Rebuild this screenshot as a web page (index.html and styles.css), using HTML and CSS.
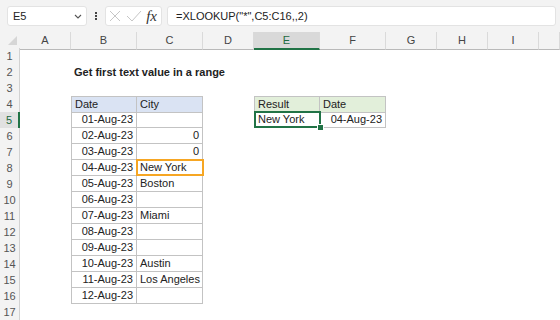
FILE: index.html
```html
<!DOCTYPE html>
<html lang="en">
<head>
  <meta charset="UTF-8" />
  <title>Get first text value in a range</title>
  <link rel="stylesheet" href="styles.css">
</head>
<body>

  <div class="toolbar">
    <div class="namebox">
      <span>E5</span>
      <svg width="8" height="5" viewBox="0 0 8 5"><path d="M1 1 L4 4 L7 1" fill="none" stroke="#555" stroke-width="1.1"/></svg>
    </div>
    <div class="dots"><i></i><i></i><i></i></div>
    <div class="fxbox">
      <svg width="12" height="12" viewBox="0 0 12 12"><path d="M1 1 L11 11 M11 1 L1 11" stroke="#c6c6c6" stroke-width="1"/></svg>
      <svg width="16" height="12" viewBox="0 0 16 12"><path d="M1 6 L6 11 L15 1" fill="none" stroke="#c6c6c6" stroke-width="1"/></svg>
      <span class="fx">fx</span>
    </div>
    <div class="formula">=XLOOKUP("*",C5:C16,,2)</div>
  </div>

  <div class="sheet">
    <div class="row head">
      <div class="corner"><svg width="20" height="16"><polygon points="17,4 17,13 8,13" fill="#d6d6d6"/></svg></div>
      <div class="ch">A</div><div class="ch">B</div><div class="ch">C</div><div class="ch">D</div>
      <div class="ch sel">E</div><div class="ch">F</div><div class="ch">G</div><div class="ch">H</div>
      <div class="ch">I</div><div class="ch"></div>
    </div>

    <div class="row"><div class="rh">1</div></div>
    <div class="row"><div class="rh">2</div><div class="c"></div><div class="c title">Get first text value in a range</div></div>
    <div class="row"><div class="rh">3</div></div>
    <div class="row">
      <div class="rh">4</div><div class="c"></div>
      <div class="c tb top lft blue">Date</div><div class="c tb top blue">City</div>
      <div class="c"></div>
      <div class="c tb top lft green">Result</div><div class="c tb top green">Date</div>
    </div>
    <div class="row">
      <div class="rh sel">5</div><div class="c"></div>
      <div class="c tb lft r">01-Aug-23</div><div class="c tb"></div>
      <div class="c"></div>
      <div class="c tb lft active">New York</div><div class="c tb r">04-Aug-23</div>
    </div>
    <div class="row"><div class="rh">6</div><div class="c"></div><div class="c tb lft r">02-Aug-23</div><div class="c tb r">0</div></div>
    <div class="row"><div class="rh">7</div><div class="c"></div><div class="c tb lft r">03-Aug-23</div><div class="c tb r">0</div></div>
    <div class="row"><div class="rh">8</div><div class="c"></div><div class="c tb lft r">04-Aug-23</div><div class="c tb mark">New York</div></div>
    <div class="row"><div class="rh">9</div><div class="c"></div><div class="c tb lft r">05-Aug-23</div><div class="c tb">Boston</div></div>
    <div class="row"><div class="rh">10</div><div class="c"></div><div class="c tb lft r">06-Aug-23</div><div class="c tb"></div></div>
    <div class="row"><div class="rh">11</div><div class="c"></div><div class="c tb lft r">07-Aug-23</div><div class="c tb">Miami</div></div>
    <div class="row"><div class="rh">12</div><div class="c"></div><div class="c tb lft r">08-Aug-23</div><div class="c tb"></div></div>
    <div class="row"><div class="rh">13</div><div class="c"></div><div class="c tb lft r">09-Aug-23</div><div class="c tb"></div></div>
    <div class="row"><div class="rh">14</div><div class="c"></div><div class="c tb lft r">10-Aug-23</div><div class="c tb">Austin</div></div>
    <div class="row"><div class="rh">15</div><div class="c"></div><div class="c tb lft r">11-Aug-23</div><div class="c tb">Los Angeles</div></div>
    <div class="row"><div class="rh">16</div><div class="c"></div><div class="c tb lft r">12-Aug-23</div><div class="c tb"></div></div>
    <div class="row"><div class="rh">17</div></div>
  </div>

</body>
</html>
```

FILE: styles.css
```css
body {
  margin: 0;
  width: 560px;
  height: 320px;
  overflow: hidden;
  background: #fff;
  font-family: "Liberation Sans", Arial, sans-serif;
  font-size: 11px;
  color: #222;
}
.toolbar {
  display: flex;
  align-items: center;
  height: 32px;
  padding: 0 4px 0 7px;
  background: #f3f3f3;
  box-sizing: border-box;
}
.namebox, .fxbox, .formula {
  height: 20px;
  box-sizing: border-box;
  background: #fff;
  border: 1px solid #e3e3e3;
  border-radius: 3px;
  display: flex;
  align-items: center;
}
.namebox {
  width: 80px;
  justify-content: space-between;
  padding: 0 4px 0 5px;
}
.dots {
  width: 18px;
  display: flex;
  flex-direction: column;
  align-items: center;
  gap: 1px;
}
.dots i {
  width: 2px;
  height: 2px;
  background: #444;
}
.fxbox {
  width: 57px;
  padding: 0 3px;
  justify-content: space-between;
}
.fx {
  font-family: "Liberation Serif", serif;
  font-style: italic;
  font-size: 15px;
  color: #333;
  padding-right: 1px;
}
.formula {
  flex: 1;
  margin-left: 5px;
  padding-left: 8px;
}
.row {
  display: grid;
  grid-template-columns: 20px 51px 66px 66px 51px 66px 66px 51px 51px 51px 21px;
  height: 16px;
}
.row > div {
  box-sizing: border-box;
  line-height: 15px;
  white-space: nowrap;
}
.head > div {
  background: #f3f3f3;
  border-bottom: 1px solid #b9b9b9;
  line-height: 16px;
}
.ch {
  text-align: center;
  color: #444;
  border-right: 1px solid #dadada;
}
.ch.sel {
  background: #d9d9d9;
  color: #1e6b41;
  border-bottom: 2px solid #217346;
}
.corner svg {
  display: block;
}
.rh {
  background: #f3f3f3;
  border-right: 1px solid #d2d2d2;
  text-align: center;
  color: #555;
  line-height: 16px !important;
}
.rh.sel {
  background: #e1e1e1;
  color: #1e6b41;
  border-right: 2px solid #217346;
}
.c {
  padding: 0 3px;
}
.title {
  font-weight: bold;
  line-height: 16px !important;
}
.tb {
  border-right: 1px solid #c3c3c3;
  border-bottom: 1px solid #c3c3c3;
}
.top {
  border-top: 1px solid #c3c3c3;
}
.lft {
  border-left: 1px solid #c3c3c3;
}
.r {
  text-align: right;
}
.blue {
  background: #dae3f3;
}
.green {
  background: #e2efda;
}
.active, .mark {
  position: relative;
}
.active::after {
  content: "";
  position: absolute;
  top: -1px;
  left: -1px;
  right: -2px;
  bottom: -1px;
  border: 2px solid #217346;
}
.active::before {
  content: "";
  position: absolute;
  right: -5px;
  bottom: -4px;
  width: 5px;
  height: 5px;
  background: #217346;
  border: 1px solid #fff;
  z-index: 1;
}
.mark::after {
  content: "";
  position: absolute;
  top: -1px;
  left: -1px;
  right: -2px;
  bottom: -1px;
  border: 2px solid #f6a623;
}
```
